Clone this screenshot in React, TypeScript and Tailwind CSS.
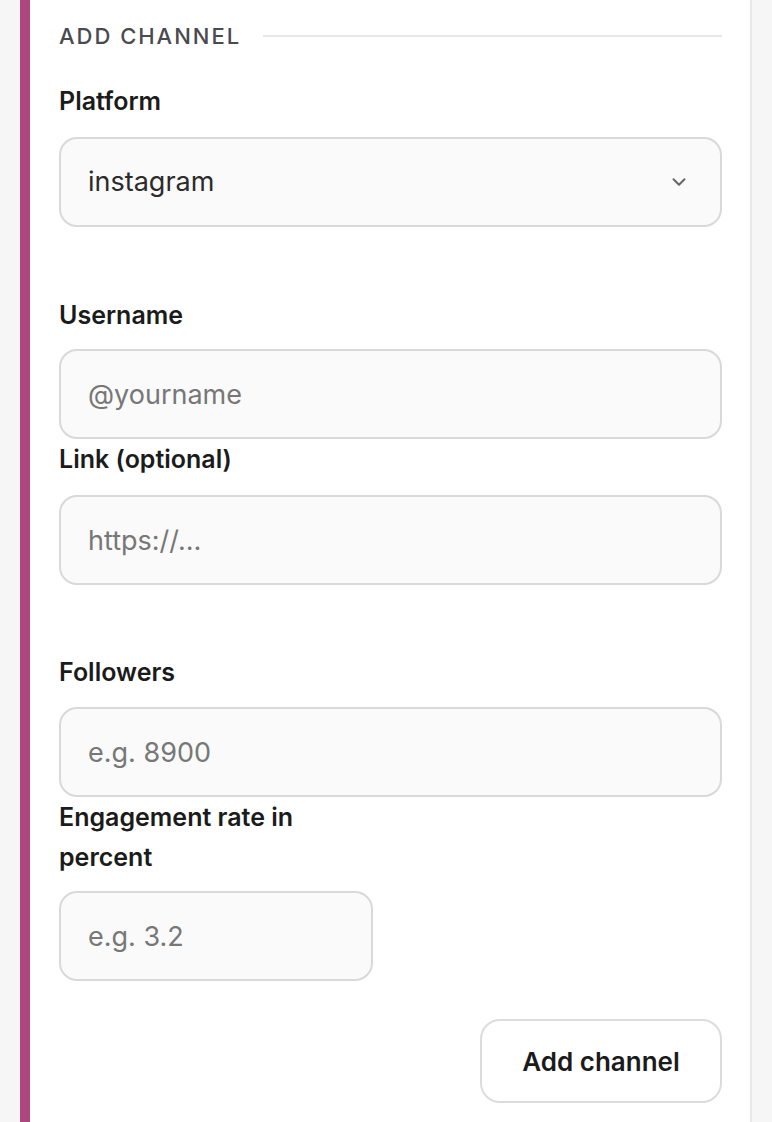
import { ChevronDown } from 'lucide-react';

const labelClass = 'block text-[25px] leading-[36px] font-semibold text-[#1b1b1b]';
const inputClass =
  'block w-full h-[90px] rounded-[18px] border-2 border-[#d9d9d9] bg-[#fafafa] px-[27px] text-[27px] text-[#333] placeholder:text-[#777] outline-none';

export default function App() {
  return (
    <div className="min-h-[1122px] w-full bg-[#f6f6f6] pl-[20px] pr-[20px] flex" style={{ fontFamily: 'Inter, "Noto Sans", sans-serif' }}>
      <div className="flex-1 bg-white border-l-[10px] border-l-[#b0467f] border-r-2 border-r-[#e8e8e8] pl-[29px] pr-[28px] pt-[18px] pb-[19px]">
        <div className="flex items-center gap-[22px]">
          <h2 className="text-[22px] leading-[36px] font-medium uppercase tracking-[0.09em] text-[#4a4a50]">Add channel</h2>
          <div className="flex-1 h-[2px] bg-[#e8e8e8]" />
        </div>

        <label className={`${labelClass} mt-[29px]`}>Platform</label>
        <div className="relative mt-[18px]">
          <div className="flex items-center h-[90px] rounded-[18px] border-2 border-[#d9d9d9] bg-[#fafafa] px-[27px] text-[27px] text-[#2b2b2b]">
            instagram
          </div>
          <ChevronDown className="absolute right-[32px] top-1/2 -translate-y-1/2 w-[22px] h-[22px] text-[#666]" strokeWidth={2.2} />
        </div>

        <label className={`${labelClass} mt-[70px]`}>Username</label>
        <input className={`${inputClass} mt-[16px]`} placeholder="@yourname" />

        <label className={`${labelClass} mt-[2px]`}>Link (optional)</label>
        <input className={`${inputClass} mt-[18px]`} placeholder="https://…" />

        <label className={`${labelClass} mt-[69px]`}>Followers</label>
        <input className={`${inputClass} mt-[17px]`} placeholder="e.g. 8900" />

        <div className="w-[314px]">
          <label className="block text-[25px] leading-[40px] font-semibold text-[#1b1b1b]">Engagement rate in percent</label>
          <input className={`${inputClass} mt-[14px]`} placeholder="e.g. 3.2" />
        </div>

        <div className="flex justify-end mt-[38px]">
          <button className="w-[242px] h-[84px] rounded-[20px] border-2 border-[#dcdcdc] bg-white text-[26px] font-semibold text-[#1b1b1b]">
            Add channel
          </button>
        </div>
      </div>
    </div>
  );
}
